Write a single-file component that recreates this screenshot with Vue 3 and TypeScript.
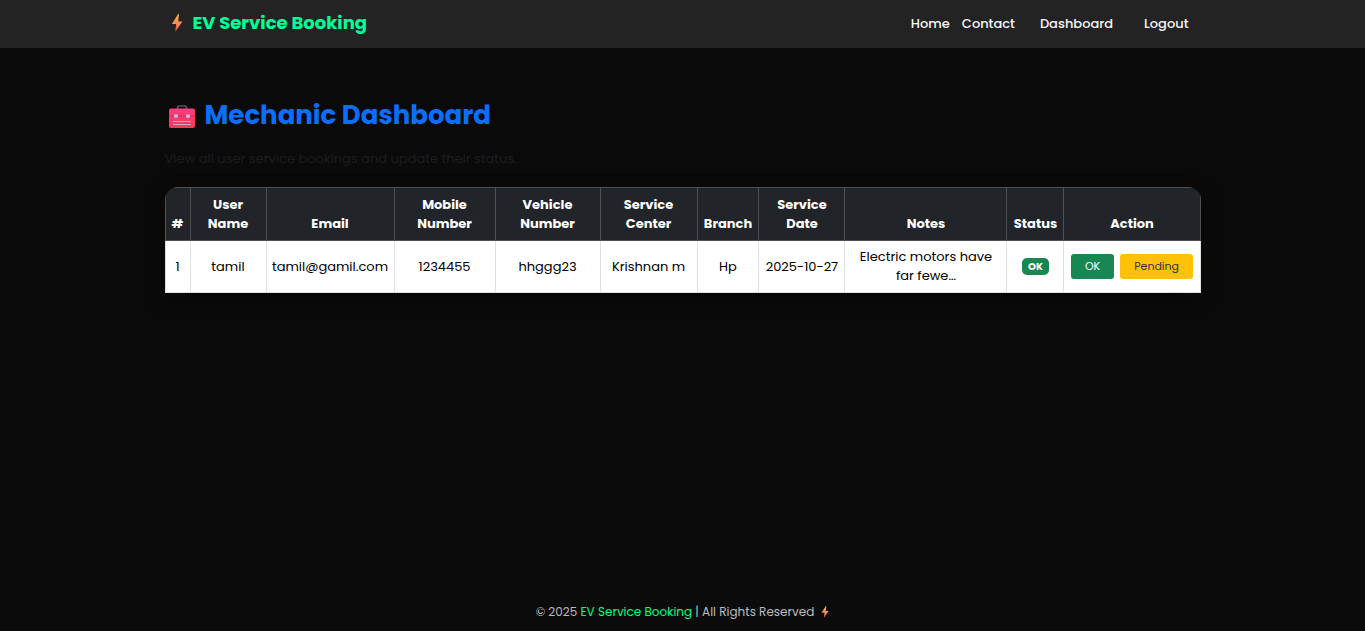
<script setup lang="ts">
interface Booking {
  id: number
  user: string
  email: string
  mobile: string
  vehicle: string
  center: string
  branch: string
  date: string
  notes: string
  status: string
}

const columns: { label: string; width: number }[] = [
  { label: '#', width: 26 },
  { label: 'User Name', width: 76 },
  { label: 'Email', width: 128 },
  { label: 'Mobile Number', width: 101 },
  { label: 'Vehicle Number', width: 105 },
  { label: 'Service Center', width: 97 },
  { label: 'Branch', width: 62 },
  { label: 'Service Date', width: 86 },
  { label: 'Notes', width: 162 },
  { label: 'Status', width: 57 },
  { label: 'Action', width: 136 },
]
const total = columns.reduce((sum, c) => sum + c.width, 0)

const bookings: Booking[] = [
  {
    id: 1,
    user: 'tamil',
    email: 'tamil@gamil.com',
    mobile: '1234455',
    vehicle: 'hhggg23',
    center: 'Krishnan m',
    branch: 'Hp',
    date: '2025-10-27',
    notes: 'Electric motors have far fewe…',
    status: 'OK',
  },
]
</script>

<template>
  <div class="page">
    <header class="navbar">
      <div class="container bar">
        <a class="brand" href="#">
          <svg class="brand-bolt" viewBox="0 0 12 18" aria-hidden="true">
            <defs>
              <linearGradient id="bolt-fill" x1="0" y1="0" x2="0" y2="1">
                <stop offset="0" stop-color="#ffb04a" />
                <stop offset="0.55" stop-color="#ff8a4c" />
                <stop offset="1" stop-color="#e8405c" />
              </linearGradient>
            </defs>
            <path d="M7.200 0 .8 10h4.400L4.200 18 11.400 7.400H7.200L8 0z" fill="url(#bolt-fill)" />
          </svg>
          <span>EV Service Booking</span>
        </a>
        <nav class="links">
          <a class="link" href="#">Home</a>
          <a class="link" href="#">Contact</a>
          <a class="link dashboard" href="#">Dashboard</a>
          <a class="link logout" href="#">Logout</a>
        </nav>
      </div>
    </header>

    <main class="container content">
      <h1 class="title">
        <svg class="toolbox" viewBox="0 0 26 23" aria-hidden="true">
          <defs>
            <linearGradient id="box-fill" x1="0" y1="0" x2="0" y2="1">
              <stop offset="0" stop-color="#ff3d7f" />
              <stop offset="1" stop-color="#f0385f" />
            </linearGradient>
          </defs>
          <path d="M8.500 4V2.200Q8.500 1 9.700 1h6.600q1.200 0 1.200 1.200V4" fill="none" stroke="#694a6c" stroke-width="1.600" />
          <rect x="0" y="3.500" width="26" height="19.500" rx="2" fill="url(#box-fill)" />
          <path d="M0 11h26" stroke="#c92f62" stroke-width="1" />
          <path d="M5 9.500h4v2.600l-2 1.200-2-1.200zM17 9.500h4v2.600l-2 1.200-2-1.200z" fill="#c7b6d6" />
          <path d="M4 16.500h18M4 19.500h18" stroke="#d5a6c4" stroke-width="1" />
        </svg>
        <span>Mechanic Dashboard</span>
      </h1>
      <p class="lead">View all user service bookings and update their status.</p>

      <div class="table-wrap">
        <table class="bookings">
          <colgroup>
            <col v-for="c in columns" :key="c.label" :style="{ width: (c.width / total) * 100 + '%' }" />
          </colgroup>
          <thead>
            <tr>
              <th v-for="c in columns" :key="c.label" scope="col">{{ c.label }}</th>
            </tr>
          </thead>
          <tbody>
            <tr v-for="b in bookings" :key="b.id">
              <td>{{ b.id }}</td>
              <td>{{ b.user }}</td>
              <td>{{ b.email }}</td>
              <td>{{ b.mobile }}</td>
              <td>{{ b.vehicle }}</td>
              <td>{{ b.center }}</td>
              <td>{{ b.branch }}</td>
              <td>{{ b.date }}</td>
              <td class="notes">{{ b.notes }}</td>
              <td><span class="badge">{{ b.status }}</span></td>
              <td>
                <div class="actions">
                  <button class="btn ok" type="button">OK</button>
                  <button class="btn pending" type="button">Pending</button>
                </div>
              </td>
            </tr>
          </tbody>
        </table>
      </div>
    </main>

    <footer class="footer">
      <span>© 2025 <span class="accent">EV Service Booking</span> | All Rights Reserved</span>
      <svg class="footer-bolt" viewBox="0 0 12 18" aria-hidden="true">
        <path d="M7.200 0 .8 10h4.400L4.200 18 11.400 7.400H7.200L8 0z" fill="url(#bolt-fill)" />
      </svg>
    </footer>
  </div>
</template>

<style>
body {
  margin: 0;
  background: #0a0a0a;
}
</style>

<style scoped>
.page {
  box-sizing: border-box;
  min-height: 100vh;
  display: flex;
  flex-direction: column;
  background: #0a0a0a;
  color: #fff;
  font-family: Poppins, Inter, "Open Sans", sans-serif;
  font-size: 13px;
  line-height: 19px;
}
.container {
  box-sizing: border-box;
  width: 100%;
  max-width: 1056px;
  margin: 0 auto;
  padding: 0 10px;
}
.navbar {
  background: #232323;
}
.bar {
  height: 48px;
  display: flex;
  align-items: center;
  justify-content: space-between;
}
.brand {
  display: flex;
  align-items: center;
  gap: 10px;
  padding: 0 0 3px 6px;
  color: #00ff99;
  font-size: 18px;
  line-height: 27px;
  font-weight: 700;
  text-decoration: none;
}
.brand-bolt {
  width: 12px;
  height: 18px;
}
.links {
  display: flex;
  align-items: center;
  padding: 0 12px 2px 0;
}
.link {
  margin-left: 12px;
  color: #f5f5f5;
  font-weight: 500;
  text-decoration: none;
}
.dashboard {
  margin-left: 25px;
}
.logout {
  margin-left: 31px;
}
.content {
  flex: 1;
  padding-top: 50px;
}
.title {
  display: flex;
  align-items: center;
  gap: 10px;
  margin: 0 0 17px;
  padding-left: 4px;
  color: #0d6efd;
  font-size: 26px;
  line-height: 34px;
  font-weight: 700;
}
.toolbox {
  width: 26px;
  height: 23px;
  margin-top: 2px;
}
.lead {
  margin: 0 0 19px;
  color: #1b1e21;
}
.table-wrap {
  border-radius: 13px;
  box-shadow: 0 6px 20px rgba(0, 0, 0, 0.3);
}
.bookings {
  width: 100%;
  table-layout: fixed;
  border-collapse: separate;
  border-spacing: 0;
  border-radius: 13px 13px 0 0;
  overflow: hidden;
  text-align: center;
}
th {
  padding: 7px 4px;
  border: solid #4d5154;
  border-width: 1px 1px 1px 0;
  background: #212529;
  color: #fff;
  font-weight: 700;
  vertical-align: bottom;
}
td {
  padding: 6px 4px 7px;
  border: solid #dee2e6;
  border-width: 0 1px 1px 0;
  background: #fff;
  color: #000;
  vertical-align: middle;
}
th:first-child,
td:first-child {
  border-left-width: 1px;
}
.notes {
  padding-left: 12px;
  padding-right: 12px;
}
.badge {
  display: inline-block;
  padding: 3px 6px;
  border-radius: 5px;
  background: #198754;
  color: #fff;
  font-size: 10px;
  line-height: 11px;
  font-weight: 700;
  vertical-align: middle;
}
.actions {
  display: flex;
  justify-content: center;
  gap: 6px;
}
.btn {
  padding: 4px 14px;
  border: 0;
  border-radius: 3px;
  font-family: inherit;
  font-size: 11px;
  line-height: 17px;
  cursor: pointer;
}
.ok {
  background: #198754;
  color: #fff;
}
.pending {
  background: #ffc107;
  color: #333;
}
.footer {
  display: flex;
  align-items: center;
  justify-content: center;
  gap: 7px;
  padding: 10px 0;
  background: #0b0b0b;
  color: #bbb;
  font-size: 12px;
  line-height: 18px;
}
.accent {
  color: #00ff7f;
}
.footer-bolt {
  width: 8px;
  height: 12px;
}
</style>
